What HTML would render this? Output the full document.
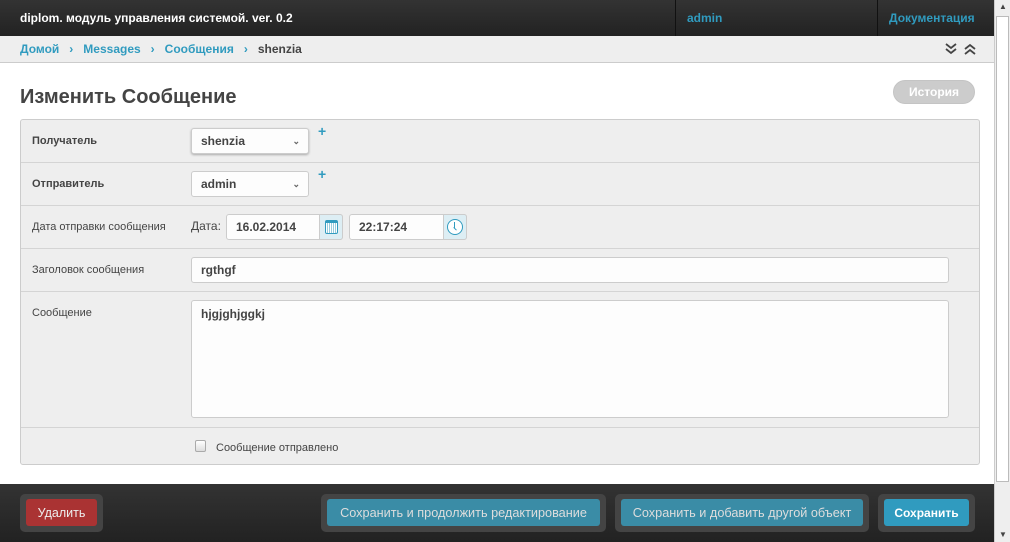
<!DOCTYPE html>
<html><head><meta charset="utf-8"><style>
*{box-sizing:border-box;margin:0;padding:0}
body{width:1010px;height:542px;overflow:hidden;background:#fff;font-family:"Liberation Sans",sans-serif;font-size:12px;color:#444;position:relative}
.a{position:absolute}
.hdr{left:0;top:0;width:994px;height:36px;background:linear-gradient(#333,#222)}
.bc{left:0;top:36px;width:994px;height:27px;background:#eee;border-bottom:1px solid #ccc}
.lnk{color:#309bbf;font-weight:bold;font-size:12px}
.sep{color:#309bbf;margin:0 10px;font-weight:bold}
.box{left:20px;top:119px;width:960px;height:346px;background:#eee;border:1px solid #ccc;border-radius:3px}
.row{position:absolute;left:0;width:958px;border-bottom:1px solid #d4d4d4}
.lbl{position:absolute;left:11px;font-size:11px;color:#444}
.lbl.b{font-weight:bold}
.inp{position:absolute;background:#fdfdfd;border:1px solid #ccc;border-radius:3px;font-size:12px;font-weight:bold;color:#444;padding-left:9px}
.plus{position:absolute;color:#309bbf;font-weight:bold;font-size:14px}
.ft{left:0;top:484px;width:994px;height:58px;background:linear-gradient(#333,#222)}
.bw{position:absolute;top:494px;height:38px;background:#444;border-radius:5px}
.btn{position:absolute;top:5px;height:27px;border-radius:3px;color:#fff;font-weight:bold;font-size:12px;text-align:center;line-height:29px}
.sb{left:994px;top:0;width:16px;height:542px;background:#eee;border-left:1px solid #ccc}
</style></head><body>
<div class="a hdr"></div>
<div class="a" style="left:20px;top:11px;color:#fff;font-weight:bold;font-size:12px">diplom. модуль управления системой. ver. 0.2</div>
<div class="a" style="left:675px;top:0;width:1px;height:36px;background:#111"></div>
<div class="a" style="left:877px;top:0;width:1px;height:36px;background:#111"></div>
<div class="a lnk" style="left:687px;top:11px">admin</div>
<div class="a lnk" style="left:889px;top:11px">Документация</div>
<div class="a bc"></div>
<div class="a" style="left:20px;top:42px;font-weight:bold"><span class="lnk">Домой</span><span class="sep">›</span><span class="lnk">Messages</span><span class="sep">›</span><span class="lnk">Сообщения</span><span class="sep">›</span><span style="color:#444">shenzia</span></div>
<svg class="a" style="left:945px;top:43px" width="32" height="12" viewBox="0 0 32 12"><g fill="none" stroke="#444" stroke-width="1.8"><path d="M1 1l5 4 5-4M1 6l5 4 5-4"/><path d="M20 6l5-4 5 4M20 11l5-4 5 4"/></g></svg>
<div class="a" style="left:20px;top:86px;font-size:20px;font-weight:bold;color:#444">Изменить Сообщение</div>
<div class="a" style="left:893px;top:80px;width:82px;height:24px;border-radius:12px;background:#ccc;border:1px solid #c4c4c4;color:#fff;font-weight:bold;text-align:center;line-height:22px">История</div>
<div class="a box">
 <div class="row" style="top:0;height:43px"><div class="lbl b" style="top:15px">Получатель</div>
  <div class="inp" style="left:170px;top:8px;width:118px;height:26px;line-height:24px;box-shadow:0 1px 2px #aaa">shenzia<span style="position:absolute;right:8px;font-size:9px;color:#666">⌄</span></div>
  <div class="plus" style="left:297px;top:3px">+</div></div>
 <div class="row" style="top:43px;height:43px"><div class="lbl b" style="top:15px">Отправитель</div>
  <div class="inp" style="left:170px;top:8px;width:118px;height:26px;line-height:24px">admin<span style="position:absolute;right:8px;font-size:9px;color:#666">⌄</span></div>
  <div class="plus" style="left:297px;top:3px">+</div></div>
 <div class="row" style="top:86px;height:43px"><div class="lbl" style="top:15px">Дата отправки сообщения</div>
  <div style="position:absolute;left:170px;top:13px;font-size:12px;color:#444">Дата:</div>
  <div class="inp" style="left:205px;top:8px;width:117px;height:26px;line-height:24px">16.02.2014</div>
  <div style="position:absolute;left:298px;top:8px;width:24px;height:26px;background:#ddeef4;border:1px solid #ccc;border-radius:0 3px 3px 0"><div style="position:absolute;left:5px;top:5px;width:13px;height:14px;border:1px solid #309bbf;border-top:3px solid #309bbf;border-radius:2px;background:repeating-linear-gradient(90deg,#fff 0 1px,#9cd 1px 2px)"></div></div>
  <div class="inp" style="left:328px;top:8px;width:118px;height:26px;line-height:24px">22:17:24</div>
  <div style="position:absolute;left:422px;top:8px;width:24px;height:26px;background:#ddeef4;border:1px solid #ccc;border-radius:0 3px 3px 0"><div style="position:absolute;left:3px;top:4px;width:16px;height:16px;border:1.5px solid #309bbf;border-radius:50%;background:#fff"><div style="position:absolute;left:6px;top:2px;width:1px;height:6px;background:#309bbf"></div><div style="position:absolute;left:6px;top:7px;width:4px;height:1px;background:#309bbf;transform:rotate(45deg);transform-origin:0 0"></div></div></div></div>
 <div class="row" style="top:129px;height:43px"><div class="lbl" style="top:15px">Заголовок сообщения</div>
  <div class="inp" style="left:170px;top:8px;width:758px;height:26px;line-height:24px">rgthgf</div></div>
 <div class="row" style="top:172px;height:136px"><div class="lbl" style="top:15px">Сообщение</div>
  <div class="inp" style="left:170px;top:8px;width:758px;height:118px;padding-top:6px">hjgjghjggkj</div></div>
 <div class="row" style="top:308px;height:37px;border:none">
  <div style="position:absolute;left:174px;top:12px;width:11px;height:12px;border:1px solid #aaa;border-radius:2px;background:linear-gradient(#fff,#ddd)"></div>
  <div style="position:absolute;left:195px;top:14px;font-size:11px;color:#444">Сообщение отправлено</div></div>
</div>
<div class="a ft"></div>
<div class="bw" style="left:20px;width:83px"><div class="btn" style="left:6px;width:71px;background:#a33;color:#eee;font-weight:normal;font-size:12.5px">Удалить</div></div>
<div class="bw" style="left:321px;width:285px"><div class="btn" style="left:6px;width:273px;background:#3a8ca6;color:#ddd;font-weight:normal;font-size:12.7px">Сохранить и продолжить редактирование</div></div>
<div class="bw" style="left:615px;width:254px"><div class="btn" style="left:6px;width:242px;background:#3a8ca6;color:#ddd;font-weight:normal;font-size:12.7px">Сохранить и добавить другой объект</div></div>
<div class="bw" style="left:878px;width:97px"><div class="btn" style="left:6px;width:85px;background:#309bbf">Сохранить</div></div>
<div class="a sb"><div style="position:absolute;left:1px;top:16px;width:13px;height:466px;background:#fff;border:1px solid #bbb"></div><div style="position:absolute;left:4px;top:2px;font-size:8px">▲</div><div style="position:absolute;left:4px;top:530px;font-size:8px">▼</div></div>
</body></html>
